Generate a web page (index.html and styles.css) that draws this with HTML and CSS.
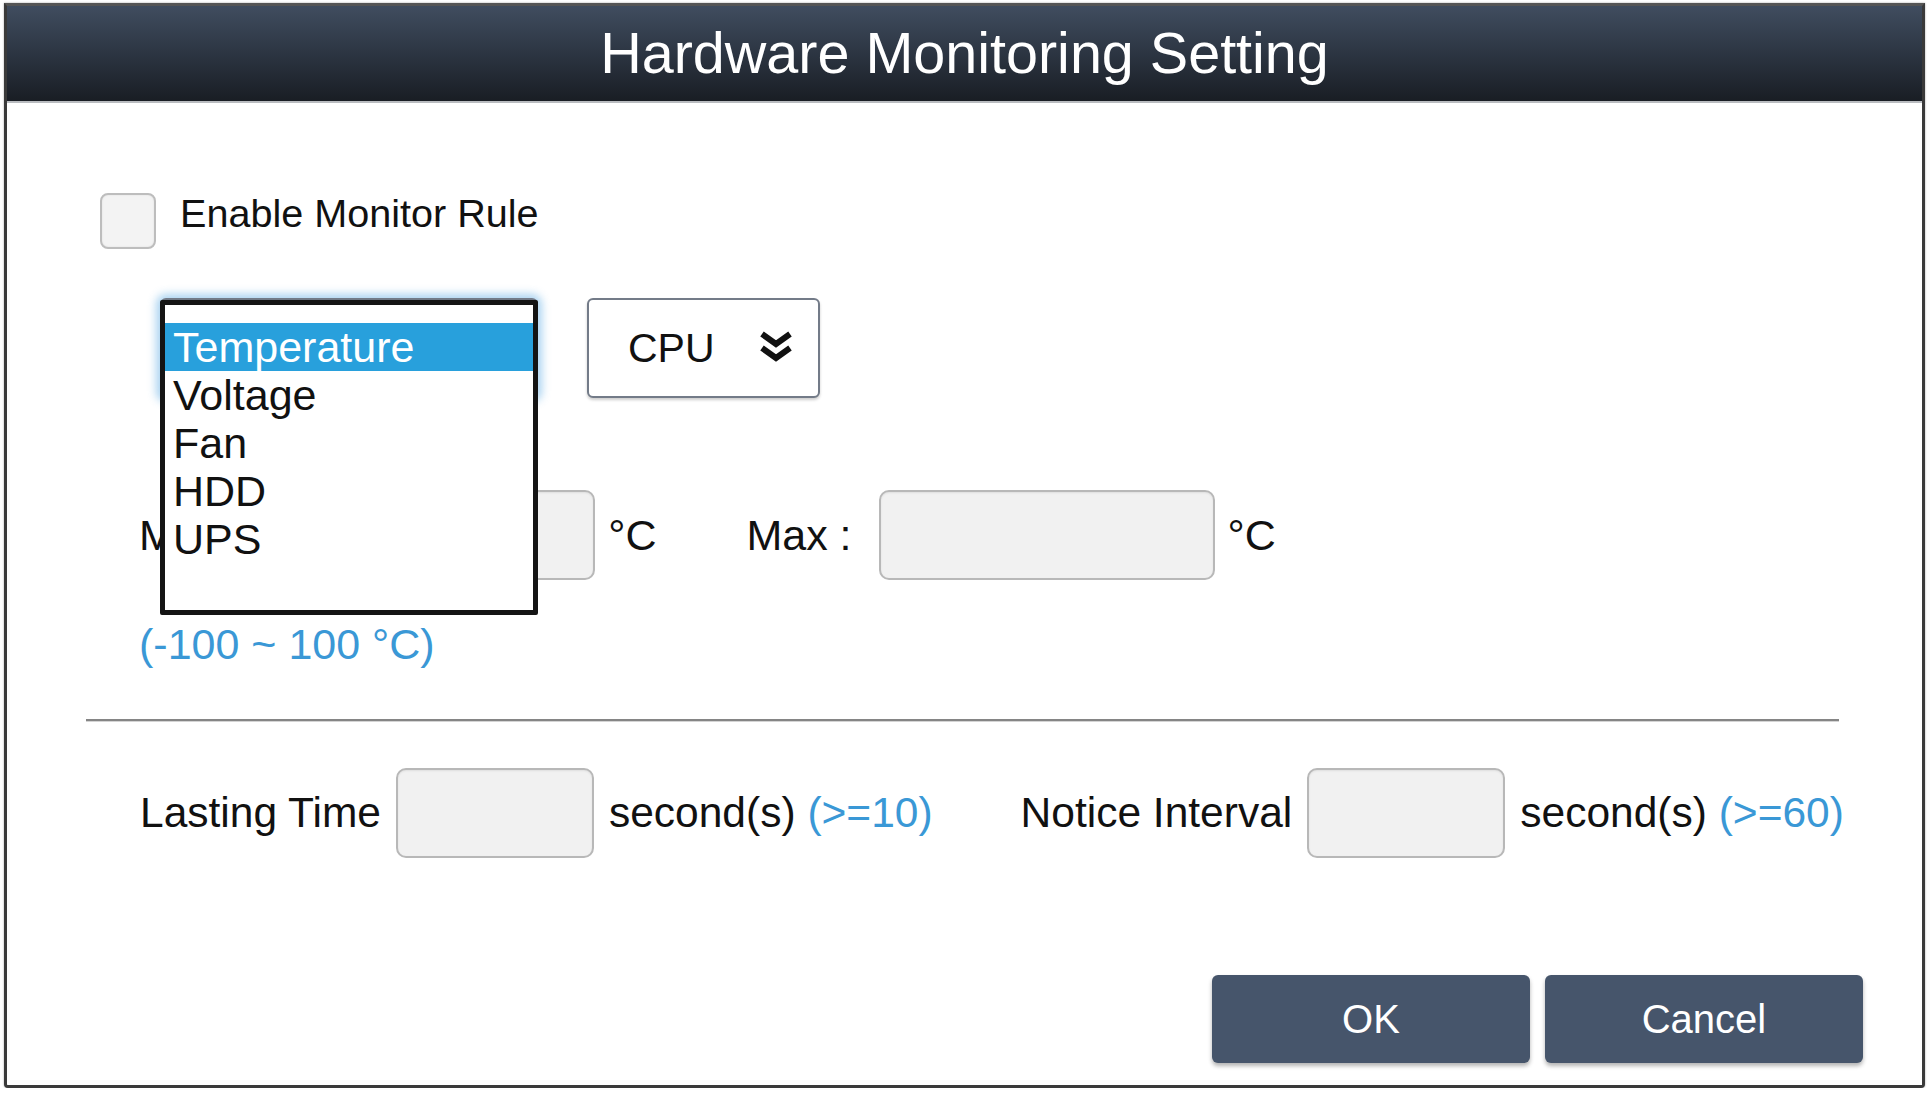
FILE: index.html
```html
<!DOCTYPE html>
<html lang="en">
<head>
<meta charset="utf-8">
<title>Hardware Monitoring Setting</title>
<link rel="stylesheet" href="styles.css">
</head>
<body>
<div class="dialog">
  <div class="titlebar">Hardware Monitoring Setting</div>
  <div class="content">
    <div class="enable-row">
      <span class="checkbox"></span>
      <span class="enable-label">Enable Monitor Rule</span>
    </div>

    <div class="select-row">
      <div class="select-wrap">
        <div class="select temp"></div>
        <div class="listbox">
          <div class="option selected">Temperature</div>
          <div class="option">Voltage</div>
          <div class="option">Fan</div>
          <div class="option">HDD</div>
          <div class="option">UPS</div>
        </div>
      </div>
      <div class="select cpu">
        <span>CPU</span>
        <svg class="chev" viewBox="0 0 38 36" width="38" height="36">
          <polyline points="5,4 19,14 33,4" fill="none" stroke="#111" stroke-width="6" stroke-linejoin="miter"/>
          <polyline points="5,18 19,28 33,18" fill="none" stroke="#111" stroke-width="6" stroke-linejoin="miter"/>
        </svg>
      </div>
    </div>

    <div class="range-row">
      <span class="lbl min-lbl">Min :</span>
      <span class="input wide"></span>
      <span class="unit">°C</span>
      <span class="lbl max-lbl">Max :</span>
      <span class="input wide"></span>
      <span class="unit">°C</span>
    </div>

    <div class="hint">(-100 ~ 100 °C)</div>

    <div class="separator"></div>

    <div class="time-row">
      <span class="lbl t">Lasting Time</span>
      <span class="input narrow"></span>
      <span class="lbl t">second(s) <span class="blue">(&gt;=10)</span></span>
      <span class="lbl t notice">Notice Interval</span>
      <span class="input narrow"></span>
      <span class="lbl t">second(s) <span class="blue">(&gt;=60)</span></span>
    </div>

    <div class="buttons">
      <div class="btn">OK</div>
      <div class="btn">Cancel</div>
    </div>
  </div>
</div>
</body>
</html>
```

FILE: styles.css
```css
html, body {
  margin: 0;
  padding: 0;
  background: #ffffff;
}

body {
  font-family: "Liberation Sans", Arial, sans-serif;
  color: #111;
}

.dialog {
  margin: 3px 0 0 4px;
  width: 1921px;
  height: 1085px;
  box-sizing: border-box;
  border: 3px solid #3a3a3a;
  border-top-color: #555;
  border-radius: 0 0 4px 4px;
  background: #fff;
  display: flex;
  flex-direction: column;
  box-shadow: 0 0 2px rgba(0,0,0,0.4);
}

.titlebar {
  height: 95px;
  border-bottom: 2px solid #b9bcc0;
  background: linear-gradient(to bottom, #404d5f 0%, #2c3542 50%, #191d24 100%);
  color: #fff;
  font-size: 57.5px;
  line-height: 95px;
  text-align: center;
}

.content {
  display: flex;
  flex-direction: column;
}

.enable-row {
  display: flex;
  align-items: flex-start;
  margin: 87px 0 0 93px;
  gap: 24px;
}

.checkbox {
  width: 52px;
  height: 52px;
  margin-top: 3px;
  border: 2px solid #bdbdbd;
  border-radius: 8px;
  background: #f3f3f3;
  box-shadow: inset 0 0 2px rgba(0,0,0,0.1);
}

.enable-label {
  font-size: 39.6px;
  line-height: 46px;
}

.select-row {
  display: flex;
  margin: 49px 0 0 153px;
  gap: 49px;
  height: 100px;
}

.select-wrap {
  position: relative;
  width: 378px;
  height: 100px;
}

.select {
  box-sizing: border-box;
  height: 100px;
  border: 2px solid #737b88;
  border-radius: 6px;
  background: #fff;
  font-size: 41px;
  display: flex;
  align-items: center;
}

.select.temp {
  width: 378px;
  box-shadow: 0 0 8px 4px rgba(70,160,225,0.45);
}

.select.cpu {
  width: 233px;
  padding-left: 39px;
  gap: 42px;
  box-shadow: 0 2px 3px rgba(0,0,0,0.2);
}

.chev {
  display: block;
}

.listbox {
  position: absolute;
  left: 0;
  top: 2px;
  width: 378px;
  height: 315px;
  box-sizing: border-box;
  border: 5px solid #141414;
  border-radius: 2px;
  background: #fff;
  padding-top: 18px;
  z-index: 2;
}

.option {
  height: 48px;
  line-height: 48px;
  font-size: 43px;
  padding-left: 8px;
  color: #111;
}

.option.selected {
  background: #28a0dc;
  color: #fff;
}

.range-row {
  display: flex;
  align-items: center;
  margin: 92px 0 0 132px;
  height: 90px;
}

.lbl {
  font-size: 43px;
  white-space: nowrap;
}

.lbl.t {
  font-size: 42.5px;
}

.min-lbl {
  margin-right: 27px;
}

.max-lbl {
  margin-left: 90px;
  margin-right: 27px;
}

.input {
  box-sizing: border-box;
  height: 90px;
  border: 2px solid #b8b8b8;
  border-radius: 10px;
  background: #f1f1f1;
  box-shadow: inset 0 1px 2px rgba(0,0,0,0.08);
}

.input.wide {
  width: 336px;
}

.input.narrow {
  width: 198px;
  margin: 0 15px;
}

.unit {
  font-size: 43px;
  margin-left: 13px;
}

.hint {
  margin: 43px 0 0 132px;
  font-size: 43px;
  line-height: 42px;
  color: #3a98d6;
}

.blue {
  color: #3a98d6;
}

.separator {
  margin: 54px 83px 0 79px;
  height: 2px;
  background: #858585;
  border-bottom: 1px solid #d4d4d4;
}

.time-row {
  display: flex;
  align-items: center;
  margin: 46px 0 0 133px;
  height: 90px;
}

.lbl.notice {
  margin-left: 88px;
}

.buttons {
  display: flex;
  justify-content: flex-end;
  gap: 15px;
  margin: 117px 59px 0 0;
}

.btn {
  width: 318px;
  height: 88px;
  box-sizing: border-box;
  border-radius: 6px;
  background: #46556b;
  color: #fff;
  font-size: 40px;
  line-height: 88px;
  text-align: center;
  box-shadow: 0 3px 4px rgba(0,0,0,0.3);
}
```
